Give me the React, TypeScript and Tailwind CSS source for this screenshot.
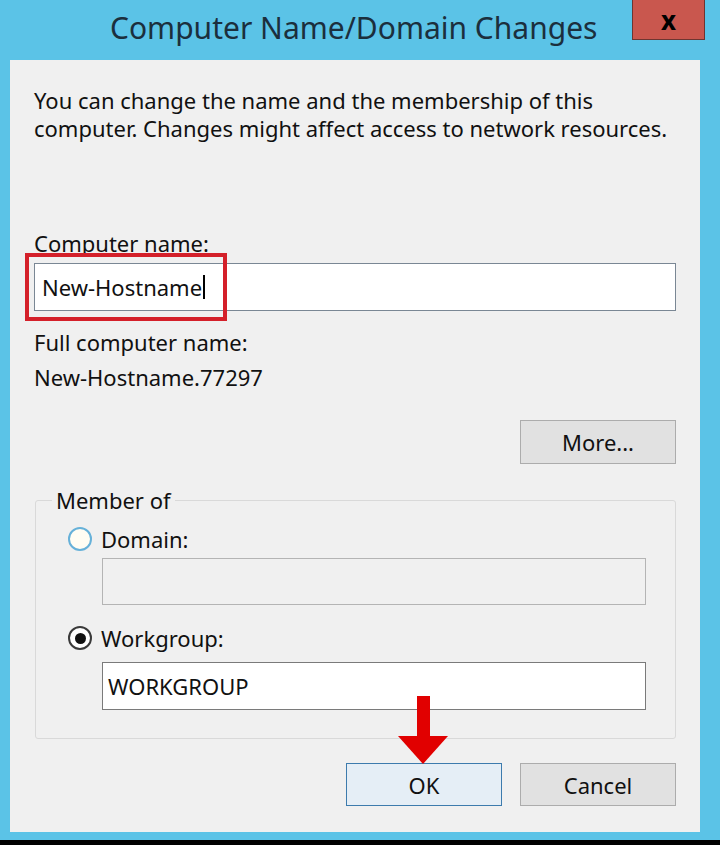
import React from 'react';

const font = { fontFamily: '"Noto Sans", "Open Sans", Arial, sans-serif' };

const Radio: React.FC<{ checked?: boolean }> = ({ checked }) =>
  checked ? (
    <span className="flex h-[24px] w-[24px] items-center justify-center rounded-full border-2 border-[#3a3a3a] bg-white">
      <span className="h-[11px] w-[11px] rounded-full bg-[#111]" />
    </span>
  ) : (
    <span className="h-[24px] w-[24px] rounded-full border-2 border-[#66b1d9] bg-[#fffdf3]" />
  );

const App: React.FC = () => {
  return (
    <div className="h-[845px] w-[720px] bg-black text-[22px] leading-[28px] text-[#111]" style={font}>
      <div className="flex h-[840px] flex-col bg-[#5bc3e7] pb-[8px] pl-[10px] pr-[20px]">
        {/* Title bar */}
        <div className="-mr-[5px] flex h-[60px] items-start justify-between pl-[100px]">
          <div className="mt-[10px] text-[30px] leading-[36px] text-[#1b2f3d]">Computer Name/Domain Changes</div>
          <button className="flex h-[40px] w-[73px] items-center justify-center border border-t-0 border-[#6e3531] bg-[#c9574e]">
            <span className="text-[26px] font-bold leading-none text-black">x</span>
          </button>
        </div>

        {/* Client area */}
        <div className="flex flex-1 flex-col bg-[#f0f0f0] px-[24px] pt-[26px]">
          <p>
            You can change the name and the membership of this
            <br />
            computer. Changes might affect access to network resources.
          </p>

          <div className="mt-[87px]">Computer name:</div>
          <div className="relative mt-[6px] flex h-[48px] items-center border border-[#7a8794] bg-white pl-[7px]">
            <span>New-Hostname</span>
            <span className="ml-[1px] h-[24px] w-[2px] bg-black" />
            <span className="pointer-events-none absolute -left-[10px] -top-[11px] h-[68px] w-[202px] border-4 border-[#d4202a]" />
          </div>

          <div className="mt-[17px]">Full computer name:</div>
          <div className="mt-[7px]">New-Hostname.77297</div>

          <div className="mt-[29px] flex justify-end">
            <button className="h-[44px] w-[156px] border border-[#acacac] bg-[#e1e1e1]">More...</button>
          </div>

          <fieldset className="ml-[1px] mt-[22px] rounded-[3px] border border-[#d9d9d9] pb-[28px] pl-[32px] pr-[29px]">
            <legend className="-ml-[16px] px-[4px]">Member of</legend>
            <label className="mt-[11px] flex items-center gap-[9px]">
              <Radio />
              <span>Domain:</span>
            </label>
            <div className="ml-[34px] mt-[5px] h-[47px] border border-[#b4b4b4] bg-[#f0f0f0]" />
            <label className="mt-[19px] flex items-center gap-[9px]">
              <Radio checked />
              <span>Workgroup:</span>
            </label>
            <div className="ml-[34px] mt-[10px] flex h-[48px] items-center border border-[#7a7a7a] bg-white pl-[5px]">
              WORKGROUP
            </div>
          </fieldset>

          <div className="mt-[24px] flex justify-end gap-[18px]">
            <div className="relative">
              <button className="h-[43px] w-[156px] border border-[#3d7bad] bg-[#e5eef6]">OK</button>
              <svg className="absolute left-[52px] -top-[67px]" width="50" height="68" viewBox="0 0 50 68">
                <rect x="19" y="0" width="13" height="41" fill="#e10000" />
                <polygon points="0,40 50,40 25,68" fill="#e10000" />
              </svg>
            </div>
            <button className="h-[43px] w-[156px] border border-[#acacac] bg-[#e1e1e1]">Cancel</button>
          </div>
        </div>
      </div>
    </div>
  );
};

export default App;
